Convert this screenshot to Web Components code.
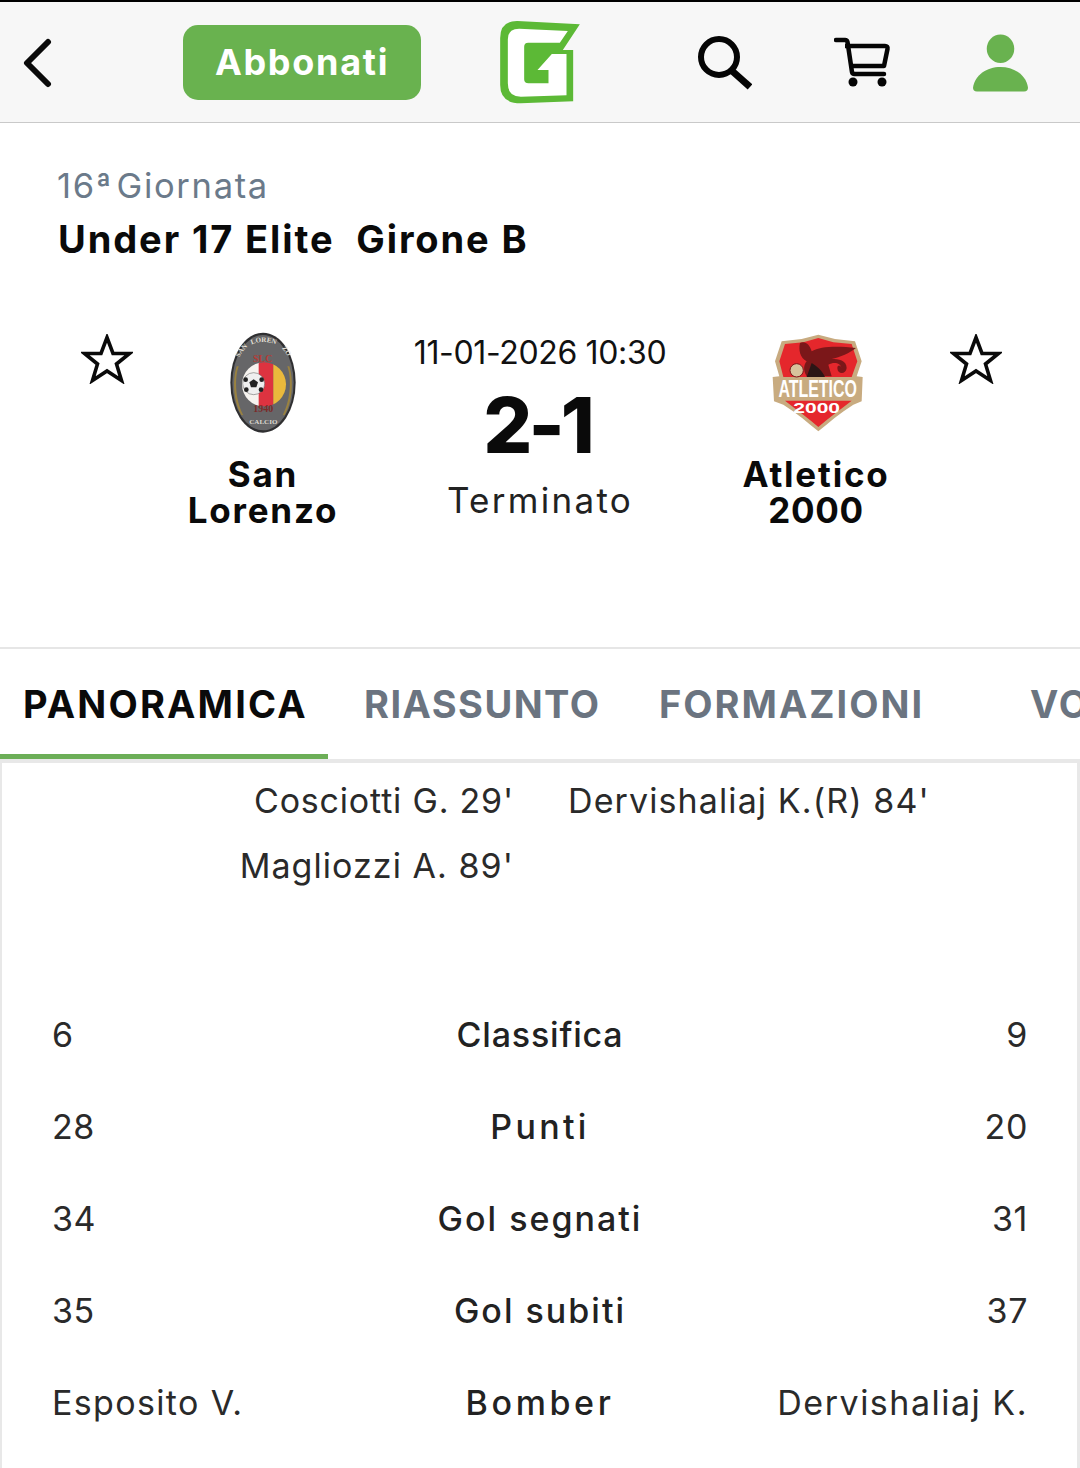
<!DOCTYPE html>
<html lang="it"><head><meta charset="utf-8"><title>Partita</title>
<style>
html,body{margin:0;padding:0;background:#fff;}
body{width:1080px;height:1468px;overflow:hidden;font-family:Inter,"Liberation Sans",sans-serif;color:#111;}
</style></head><body>
<app-header></app-header>
<match-head></match-head>
<tab-bar></tab-bar>
<match-panel></match-panel>
<script>
function el(name,html){customElements.define(name,class extends HTMLElement{constructor(){super();this.attachShadow({mode:'open'}).innerHTML=html;}});}

el('app-header',`<style>
:host{display:flex;box-sizing:border-box;height:123px;border-top:2px solid #000;border-bottom:1px solid #c9c9c9;background:#f7f7f7;align-items:center}
svg{display:block;flex:none}
.btn{flex:none;box-sizing:border-box;width:238px;height:75px;margin-left:131px;background:#69b24f;border-radius:15px;color:#fff;font:700 36px Inter,sans-serif;letter-spacing:1.7px;display:flex;align-items:center;justify-content:center;margin-top:1px;padding-bottom:1px}
</style>
<svg style="margin-left:21px;margin-top:1px" width="31" height="50" viewBox="0 0 31 50"><path d="M27 4 6 25l21 21" fill="none" stroke="#0a0a0a" stroke-width="6" stroke-linecap="round" stroke-linejoin="round"/></svg>
<div class="btn">Abbonati</div>
<svg style="margin-left:78px;margin-top:1px" width="82" height="85" viewBox="30 20 245 255"><path d="M33 74Q33 22 85 23L272 33 221 110H252V264L95 270Q33 270 33 215Z" fill="#5cb936"/><path d="M56 78Q56 46 90 46L236 53 212 88H117Q105 88 105 100V198Q105 210 118 210H178V170H145L188 122H232V246L95 250Q56 250 56 210Z" fill="#fff"/></svg>
<svg style="margin-left:115px" width="56" height="56" viewBox="0 0 56 56"><circle cx="23" cy="23" r="18" fill="none" stroke="#050505" stroke-width="6"/><path d="M35 36 54 53" fill="none" stroke="#050505" stroke-width="7"/></svg>
<svg style="margin-left:82px;margin-top:2px" width="57" height="52" viewBox="0 0 57 52"><path d="M2 3h9q2 0 2.500 2L18 35q.4 2 2.500 2H50" fill="none" stroke="#050505" stroke-width="4.500" stroke-linecap="round"/><path d="M11 9H51q3 0 2.500 3L50 29H16" fill="none" stroke="#050505" stroke-width="4.500" stroke-linejoin="round"/><circle cx="19" cy="45" r="4.500" fill="#050505"/><circle cx="48" cy="45" r="4.500" fill="#050505"/></svg>
<svg style="margin-left:82px;margin-top:4px" width="55" height="60" viewBox="0 0 56 60"><ellipse cx="28" cy="14.500" rx="14" ry="14.500" fill="#69b24f"/><path d="M0 54C2 41 14 33 28 33S54 41 56 54Q56 58 52 58H4Q0 58 0 54Z" fill="#69b24f"/></svg>`);

el('match-head',`<style>
:host{display:block;box-sizing:border-box;height:524px;padding:41px 0 0 57px}
.g{color:#6b7a8a;font-size:34.500px;line-height:44px;letter-spacing:1.7px;word-spacing:-8px}
.t{font-weight:700;font-size:38px;line-height:44px;margin:9px 0 0 1px;white-space:pre;letter-spacing:1.9px;color:#0a0a0a}
.m{display:grid;grid-template-columns:103px 206px 348px 204px auto;margin:71px 0 0 0}
.s{padding:2px 0 0 24px}
.team{display:flex;flex-direction:column;align-items:center;font-weight:700;font-size:35px;letter-spacing:1.8px;text-align:center;color:#0a0a0a}
.team div{height:36px;line-height:36px;overflow:visible}
.c{text-align:center;display:flex;flex-direction:column;align-items:center;color:#111;padding-top:2px}
.d{font-size:32px;line-height:38px;letter-spacing:-.35px}
.r{font-weight:800;font-size:77px;line-height:94px;margin:6px 6px 0 0;letter-spacing:-4px;color:#0a0a0a}
.st{font-size:35px;line-height:40px;margin-top:8px;letter-spacing:2.3px;color:#222}
</style>
<div class="g">16ª Giornata</div>
<div class="t">Under 17 Elite  Girone B</div>
<div class="m">
<div class="s"><star-icon></star-icon></div>
<div class="team"><san-lorenzo-logo></san-lorenzo-logo><div>San</div><div>Lorenzo</div></div>
<div class="c"><div class="d">11-01-2026 10:30</div><div class="r">2-1</div><div class="st">Terminato</div></div>
<div class="team"><atletico-logo></atletico-logo><div>Atletico</div><div style="letter-spacing:.7px">2000</div></div>
<div class="s" style="padding-left:32px"><star-icon></star-icon></div>
</div>`);

el('star-icon',`<style>:host{display:block;width:52px;height:50px}svg{display:block}</style><svg width="52" height="50" viewBox="0 0 52 50"><path d="M26 3.500 32 19.500H48.500L35.500 30 40.500 46.500 26 37 11.500 46.500 16.500 30 3.500 19.500H20Z" fill="none" stroke="#0a0a0a" stroke-width="3.600"/></svg>`);

el('san-lorenzo-logo',`<style>:host{display:block;width:68px;height:102px;margin-bottom:22px}svg{display:block}text{font-family:"Liberation Serif",serif;font-weight:700;letter-spacing:0}</style>
<svg width="68" height="102" viewBox="89 35 204 306">
<ellipse cx="191" cy="187" rx="98" ry="150" fill="#2f2f31"/>
<ellipse cx="191" cy="187" rx="92" ry="143" fill="#666668"/>
<path d="M118 138C106 170 106 235 132 285L126 284C100 240 100 175 112 138Z" fill="#9a8240"/>
<path d="M264 138C276 170 276 235 250 285L256 284C282 240 282 175 270 138Z" fill="#9a8240"/>
<defs><clipPath id="c"><ellipse cx="194" cy="192" rx="66" ry="66"/></clipPath></defs>
<g clip-path="url(#c)"><rect x="120" y="120" width="60" height="140" fill="#f6f3ef"/><rect x="178" y="120" width="44" height="140" fill="#dd3340"/><rect x="222" y="120" width="40" height="140" fill="#eab93c"/></g>
<circle cx="163" cy="190" r="33" fill="#efefef" stroke="#555" stroke-width="1.500"/>
<path d="M163 177l13 9-5 15h-16l-5-15Z" fill="#222"/><circle cx="139" cy="178" r="7" fill="#222"/><circle cx="187" cy="178" r="7" fill="#222"/><circle cx="141" cy="208" r="7" fill="#222"/><circle cx="185" cy="208" r="7" fill="#222"/>
<text x="190" y="124" text-anchor="middle" font-size="30" fill="#b53a35">SLC</text>
<text x="192" y="276" text-anchor="middle" font-size="30" fill="#7c2a28">1940</text>
<path id="a0" d="M114 128Q126 86 160 70" fill="none"/>
<text font-size="21" fill="#e4e0d8"><textPath href="#a0" startOffset="50%" text-anchor="middle">SAN</textPath></text>
<path id="a1" d="M158 72Q192 58 228 72" fill="none"/>
<text font-size="21" fill="#e4e0d8"><textPath href="#a1" startOffset="50%" text-anchor="middle">LOREN</textPath></text>
<path id="a2" d="M230 72Q260 88 272 128" fill="none"/>
<text font-size="21" fill="#e4e0d8"><textPath href="#a2" startOffset="50%" text-anchor="middle">ZO</textPath></text>
<text x="192" y="312" text-anchor="middle" font-size="21" fill="#dcd8d0">CALCIO</text>
</svg>`);

el('atletico-logo',`<style>:host{display:block;width:95px;height:100px;margin-top:1px;margin-bottom:23px}svg{display:block}text{font-family:"Liberation Sans",sans-serif;font-weight:700;letter-spacing:0}</style>
<svg width="95" height="100" viewBox="57 40 285 300">
<path d="M205 45 255 58 315 65 335 125 320 170 338 172 335 245 310 255C270 280 235 310 205 335 175 310 140 280 100 255L72 245 68 172 88 170 75 125 95 65 155 58Z" fill="#c8ab80"/>
<path d="M205 55 250 68 305 73 322 125 305 172H100L88 125 105 73 160 68Z" fill="#e5272c"/>
<path d="M105 243H305C270 270 235 295 205 322 175 295 140 270 105 243Z" fill="#e5272c"/>
<path d="M185 95C210 80 260 78 318 85 300 100 270 112 245 118 265 118 290 122 290 145 288 165 262 165 262 145 262 135 272 135 274 145 272 128 250 126 235 135L245 170H170C158 150 162 135 170 125 150 115 145 90 150 70 165 62 180 75 185 95Z" fill="#7b1719"/>
<path d="M185 130C200 140 215 150 225 172H170Z" fill="#2a1616"/>
<circle cx="140" cy="152" r="20" fill="#d8c29c" stroke="#7b1719" stroke-width="3"/>
<text transform="translate(203 232) scale(.665 1)" text-anchor="middle" font-size="72" fill="#fff">ATLETICO</text>
<text transform="translate(200 280) scale(1.5 1)" text-anchor="middle" font-size="42" fill="#fff">2000</text>
</svg>`);

el('tab-bar',`<style>
:host{display:flex;box-sizing:border-box;height:112px;border-top:2px solid #e6e6e6;overflow:hidden;white-space:nowrap;font-weight:700;font-size:38px;color:#6b7480}
div{flex:none;box-sizing:border-box;height:110px;line-height:111px;letter-spacing:2px}
.a{width:328px;padding-left:23px;color:#0a0a0a;border-bottom:5px solid #6cae57;letter-spacing:2.2px}
.b{margin-left:36px;width:295px;letter-spacing:1.45px}.c{width:371px}
</style><div class="a">PANORAMICA</div><div class="b">RIASSUNTO</div><div class="c">FORMAZIONI</div><div>VOTI</div>`);

el('stat-row',`<style>
:host{display:grid;grid-template-columns:1fr 1fr 1fr;height:92px;align-items:center;font-size:34px;letter-spacing:.6px;color:#2a2a2a}
.m{text-align:center;font-weight:500;white-space:nowrap;color:#222}.r{text-align:right}
</style><div><slot name="l"></slot></div><div class="m"><slot></slot></div><div class="r"><slot name="r"></slot></div>`);

el('match-panel',`<style>
:host{display:block;box-sizing:border-box;height:710px;border:solid #e8e8e8;border-width:4px 3px 0 2px;padding:0 49px 0 50px}
.sc{display:grid;grid-template-columns:462px 1fr;grid-auto-rows:65px;align-content:start;column-gap:54px;font-size:34px;line-height:65px;color:#2a2a2a;height:220px;margin-top:5px}
.sc div:nth-child(odd){text-align:right;letter-spacing:.8px}
.sc div:nth-child(3){letter-spacing:1.05px}
.sc div:nth-child(even){letter-spacing:1.1px}
</style>
<div class="sc"><div>Cosciotti G. 29'</div><div>Dervishaliaj K.(R) 84'</div><div>Magliozzi A. 89'</div><div></div></div>
<stat-row><span slot="l">6</span><span style="letter-spacing:.8px">Classifica</span><span slot="r">9</span></stat-row>
<stat-row><span slot="l">28</span><span style="letter-spacing:3.3px">Punti</span><span slot="r">20</span></stat-row>
<stat-row><span slot="l">34</span><span style="letter-spacing:2px">Gol segnati</span><span slot="r">31</span></stat-row>
<stat-row><span slot="l">35</span><span style="letter-spacing:2px">Gol subiti</span><span slot="r">37</span></stat-row>
<stat-row><span slot="l" style="letter-spacing:1.35px">Esposito V.</span><span style="letter-spacing:3.6px">Bomber</span><span slot="r" style="letter-spacing:1.5px">Dervishaliaj K.</span></stat-row>`);
</script>
</body></html>
